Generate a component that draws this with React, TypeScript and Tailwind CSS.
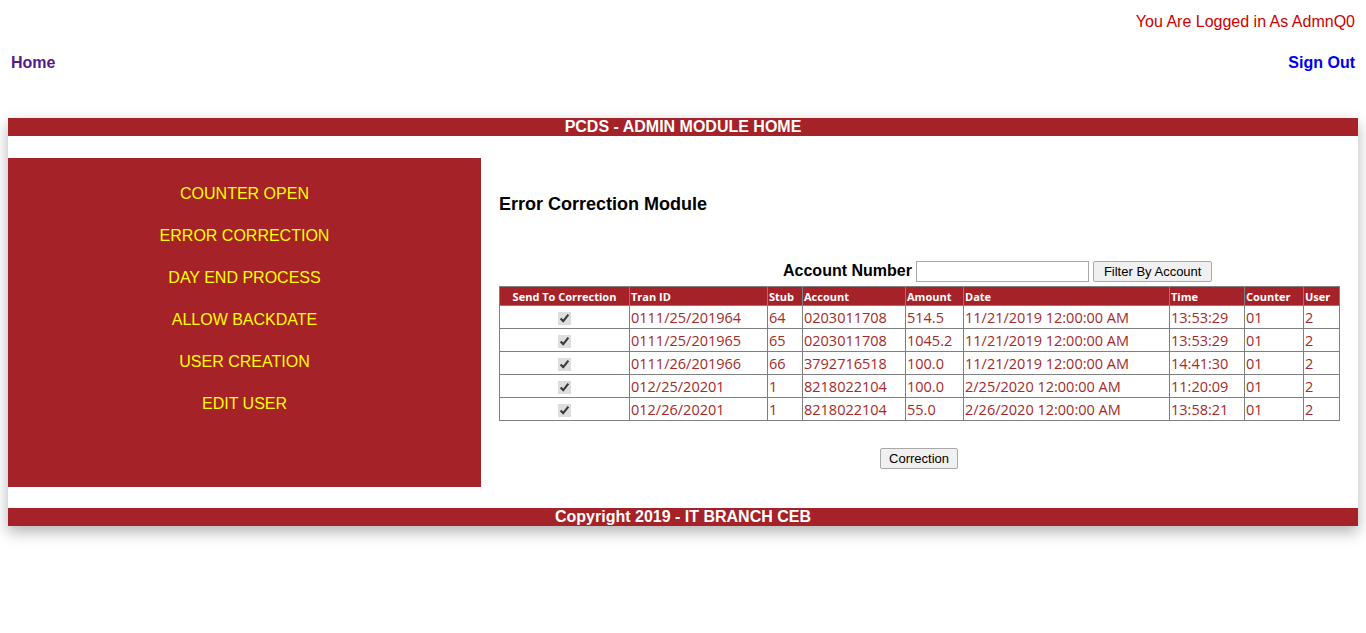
const menu = [
  "COUNTER OPEN",
  "ERROR CORRECTION",
  "DAY END PROCESS",
  "ALLOW BACKDATE",
  "USER CREATION",
  "EDIT USER",
];

const rows = [
  ["0111/25/201964", "64", "0203011708", "514.5", "11/21/2019 12:00:00 AM", "13:53:29", "01", "2"],
  ["0111/25/201965", "65", "0203011708", "1045.2", "11/21/2019 12:00:00 AM", "13:53:29", "01", "2"],
  ["0111/26/201966", "66", "3792716518", "100.0", "11/21/2019 12:00:00 AM", "14:41:30", "01", "2"],
  ["012/25/20201", "1", "8218022104", "100.0", "2/25/2020 12:00:00 AM", "11:20:09", "01", "2"],
  ["012/26/20201", "1", "8218022104", "55.0", "2/26/2020 12:00:00 AM", "13:58:21", "01", "2"],
];

const heads = ["Tran ID", "Stub", "Account", "Amount", "Date", "Time", "Counter", "User"];
const widths = ["w-[130px]", "w-[138px]", "w-[35px]", "w-[103px]", "w-[58px]", "w-[206px]", "w-[75px]", "w-[59px]", "w-[36px]"];

export default function App() {
  return (
    <div className="min-h-[633px] bg-white font-['Liberation_Sans',Arial,sans-serif] text-black">
      {/* top strip */}
      <div className="flex justify-end px-[11px] pt-[10px] text-[16px] text-[#cc0000]">
        You Are Logged in As AdmnQ0
      </div>
      <div className="flex items-center justify-between px-[11px] pt-[17px] text-[16px] font-bold">
        <a href="#" className="text-[#551a8b]">Home</a>
        <a href="#" className="text-[#0000ee]">Sign Out</a>
      </div>

      {/* main frame */}
      <div className="mx-[8px] mt-[43px] bg-white shadow-[0_6px_14px_rgba(0,0,0,0.3)]">
        <div className="h-[18px] bg-[#a52229] text-center text-[16px] font-bold leading-[18px] text-white">
          PCDS - ADMIN MODULE HOME
        </div>

        <div className="flex pt-[22px] pb-[21px]">
          {/* side menu */}
          <div className="flex h-[329px] w-[473px] shrink-0 flex-col items-center gap-[21px] bg-[#a52229] pt-[25px] text-[16px] text-[#ffff00]">
            {menu.map((m) => (
              <a key={m} href="#" className="leading-[21px]">{m}</a>
            ))}
          </div>

          {/* content */}
          <div className="flex-1 pl-[18px] pr-[18px]">
            <h2 className="mt-[36px] text-[18px] font-bold leading-[21px]">Error Correction Module</h2>

            <div className="mt-[44px] flex items-center gap-[4px] pl-[284px]">
              <span className="text-[16px] font-bold">Account Number</span>
              <input className="h-[21px] w-[173px] border border-[#a9a9a9] px-1 text-[13px] outline-none" />
              <button className="h-[21px] rounded-[2px] border border-[#a9a9a9] bg-[#f0f0f0] px-[10px] text-[13px] leading-[19px]">
                Filter By Account
              </button>
            </div>

            <table className="mt-[3px] w-[840px] table-fixed border-collapse font-['Open_Sans',sans-serif]">
              <colgroup>
                {widths.map((w, i) => (
                  <col key={i} className={w} />
                ))}
              </colgroup>
              <thead>
                <tr className="h-[19px] bg-[#a52229] text-[11px] font-bold text-white">
                  <th className="border border-[#808080] px-[2px] text-center leading-[17px]">Send To Correction</th>
                  {heads.map((h) => (
                    <th key={h} className="border border-[#808080] px-[1px] text-left leading-[17px]">{h}</th>
                  ))}
                </tr>
              </thead>
              <tbody>
                {rows.map((r, i) => (
                  <tr key={i} className="h-[23px] text-[14.5px] text-[#a52a2a]">
                    <td className="border border-[#808080] text-center leading-[21px]">
                      <input type="checkbox" defaultChecked readOnly className="h-[13px] w-[13px] accent-[#dedede] align-[-2px]" />
                    </td>
                    {r.map((c, j) => (
                      <td key={j} className="overflow-hidden whitespace-nowrap border border-[#808080] px-[1px] leading-[21px]">{c}</td>
                    ))}
                  </tr>
                ))}
              </tbody>
            </table>

            <div className="mt-[27px] flex w-[840px] justify-center">
              <button className="h-[21px] rounded-[2px] border border-[#a9a9a9] bg-[#f0f0f0] px-[8px] text-[13px] leading-[19px]">
                Correction
              </button>
            </div>
          </div>
        </div>

        <div className="h-[18px] bg-[#a52229] text-center text-[16px] font-bold leading-[18px] text-white">
          Copyright 2019 - IT BRANCH CEB
        </div>
      </div>
    </div>
  );
}
